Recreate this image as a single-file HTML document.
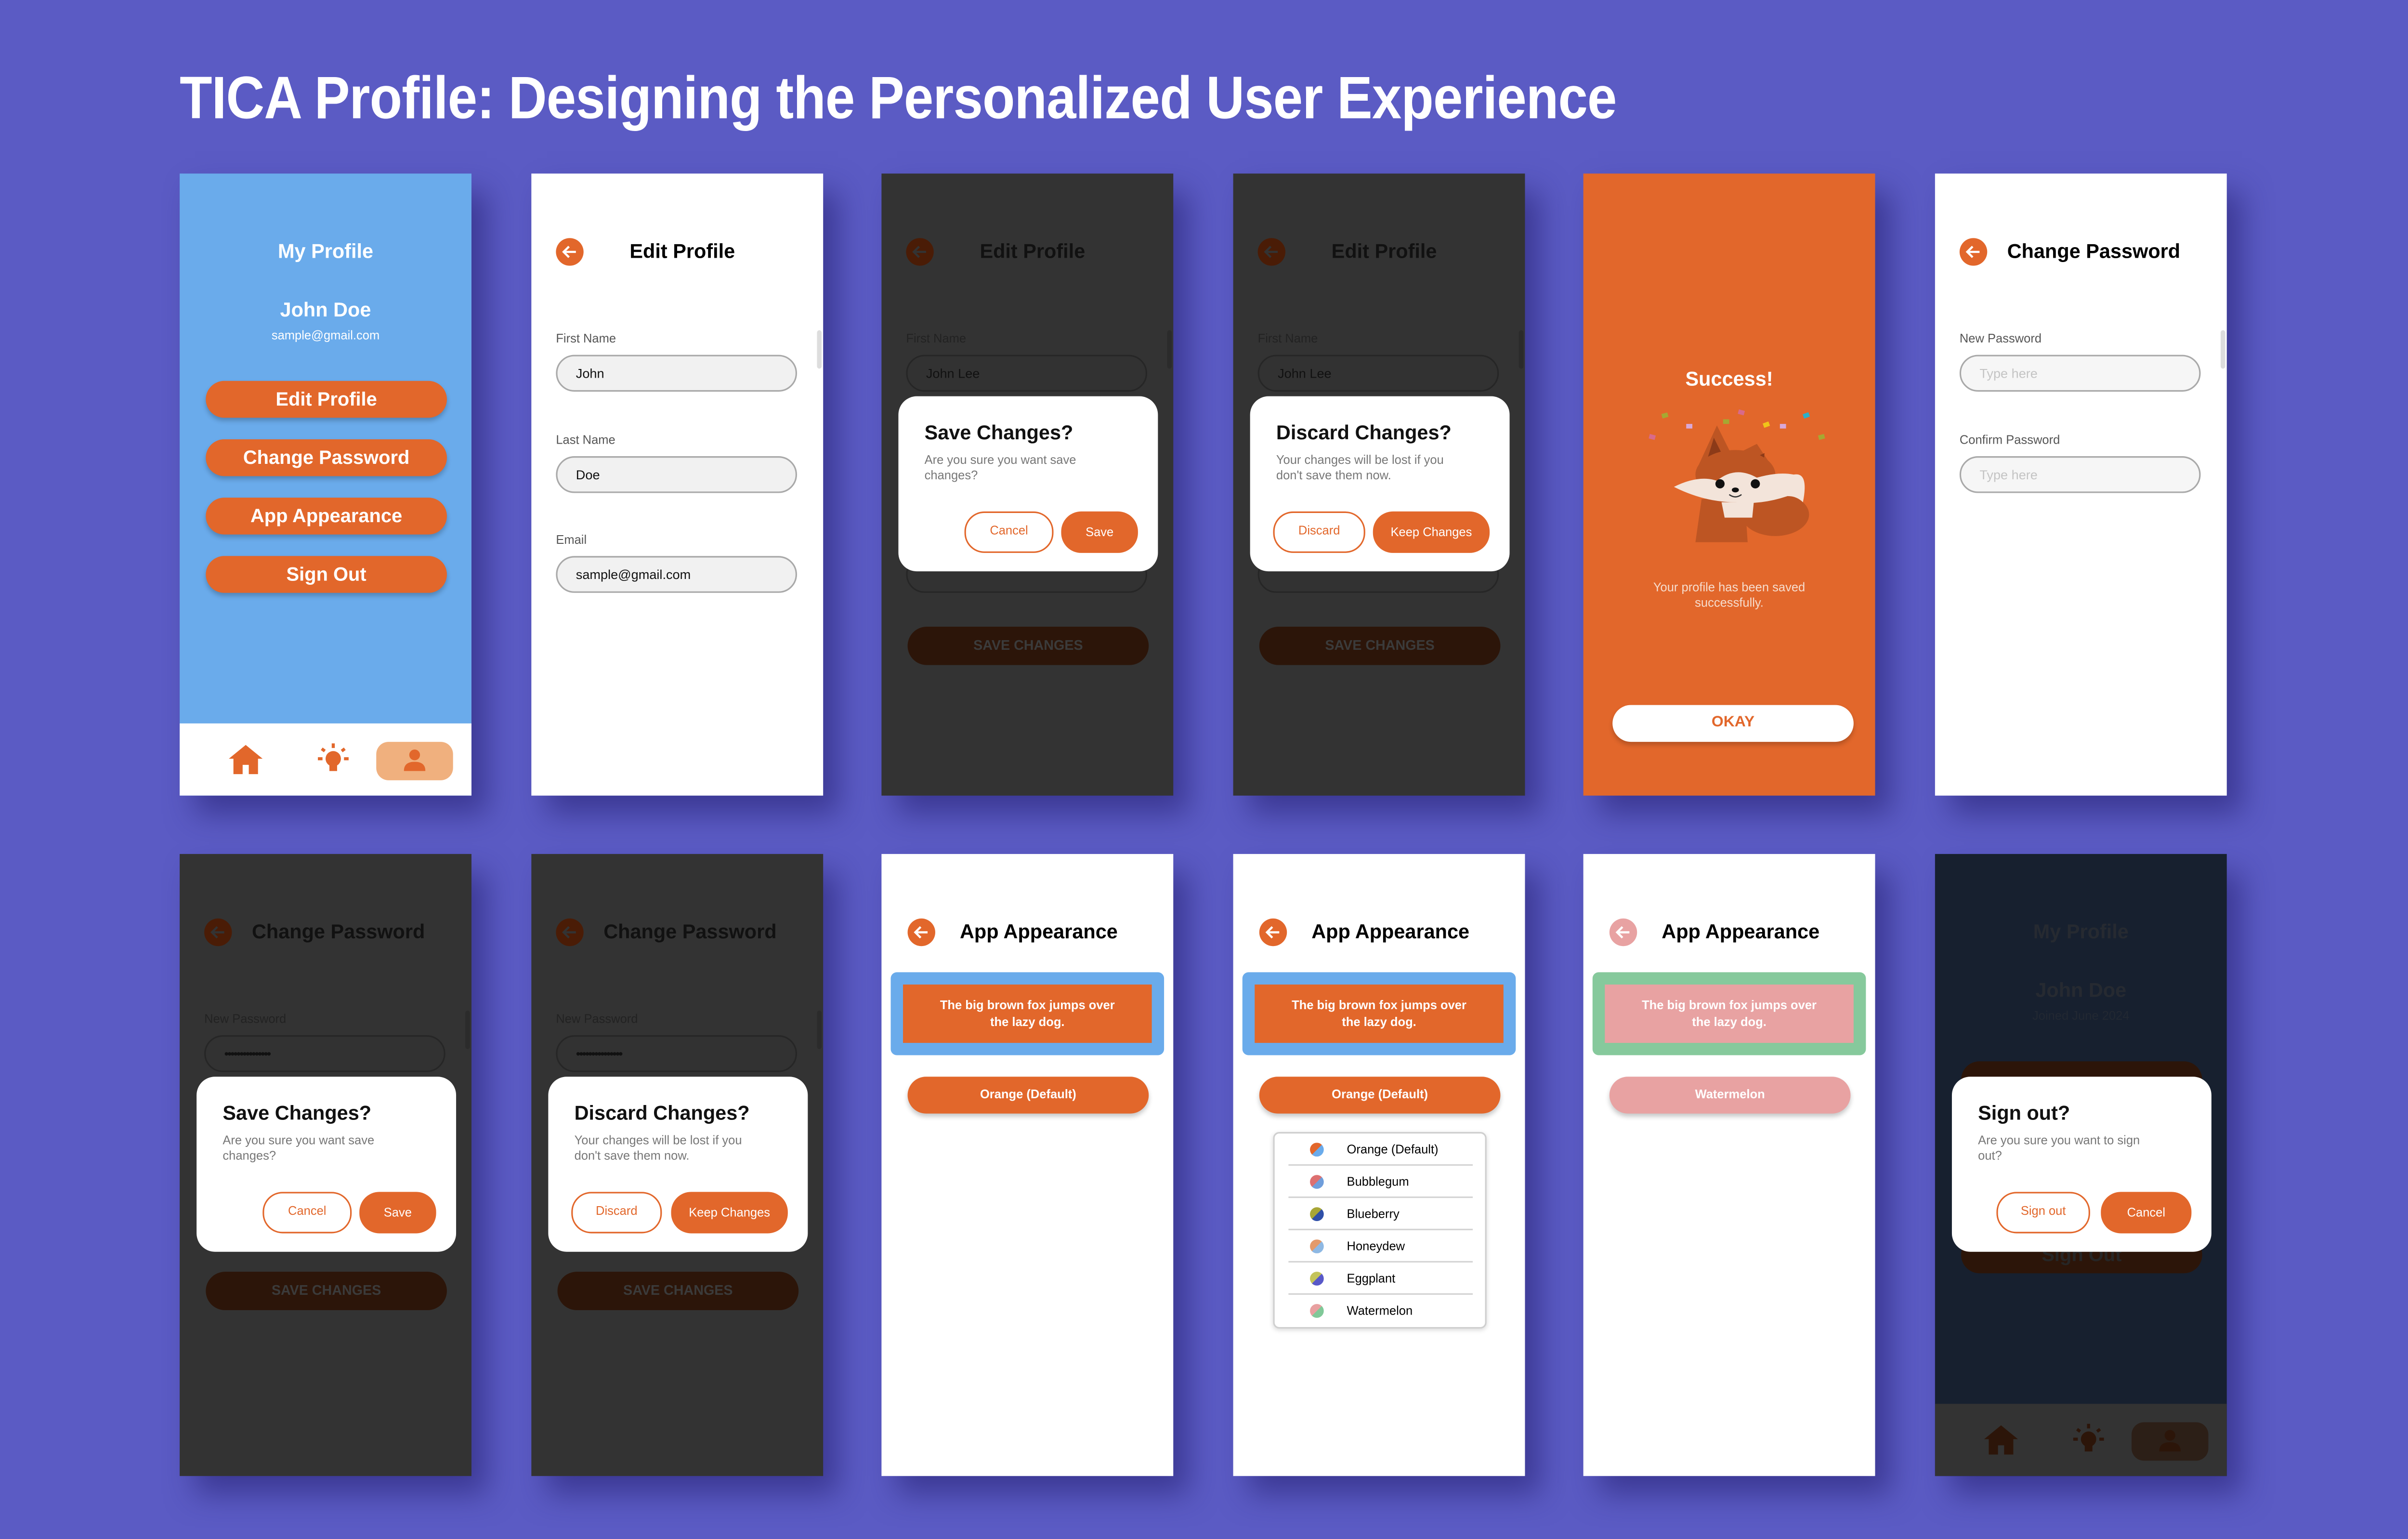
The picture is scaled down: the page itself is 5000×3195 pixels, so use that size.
<!DOCTYPE html>
<html><head><meta charset="utf-8">
<style>
html,body{margin:0;padding:0}
body{width:5000px;height:3195px;overflow:hidden;background:#5b5bc4;font-family:"Liberation Sans",sans-serif}
#w{position:absolute;left:0;top:0;width:1568px;height:1002px;transform:scale(3.18878,3.18862);transform-origin:0 0}
.s{position:absolute;width:190px;height:405px;overflow:hidden;box-shadow:10px 12px 18px rgba(35,30,110,.55)}
.a{position:absolute}
.c{text-align:center}
.t13{font-size:13px;font-weight:bold;line-height:16px}
.t8{font-size:8px;line-height:10px}
.btn{position:absolute;border-radius:13px;background:#e2672b;color:#fff;text-align:center;font-weight:bold;box-shadow:0 2px 3px rgba(0,0,0,.22)}
.inp{position:absolute;left:16px;width:155px;height:22px;border-radius:12px;border:1px solid #a9a9a9;background:#f1f1f1;font-size:8.5px;line-height:22px;text-indent:12px;color:#111}
.lab{position:absolute;left:16px;font-size:8px;color:#555;line-height:10px}
.back{position:absolute;width:18px;height:18px;border-radius:50%;background:#e2672b}
.modal{position:absolute;left:11px;top:145px;width:169px;height:114px;background:#fff;border-radius:12px}
.ob{position:absolute;border:1.5px solid #e2672b;color:#e2672b;border-radius:13px;text-align:center;font-size:8px;box-sizing:border-box;background:#fff}
.fb{position:absolute;background:#e2672b;color:#fff;border-radius:13px;text-align:center;font-size:8px}
.dk{position:absolute;left:17px;width:157px;height:25px;border-radius:13px;background:#2c1509;color:#3b3b3b;text-align:center;font-weight:bold;font-size:9px;line-height:25px;font-family:"Liberation Sans Narrow","Liberation Sans",sans-serif}
.row{position:absolute;left:0;width:137px;height:21px;font-size:8px;line-height:21px}
.row .d{position:absolute;left:23px;top:6px;width:9px;height:9px;border-radius:50%}
.row span{position:absolute;left:47px}
.row i{position:absolute;left:9px;right:8px;bottom:0;height:1px;background:#d4d4d4}
</style></head><body>
<div id="w">
<div class="a" style="left:117px;top:44.8px;white-space:nowrap;"><span id="t" style="display:inline-block;transform-origin:0 0;font-family:'Liberation Sans Narrow','Liberation Sans',sans-serif;font-weight:bold;font-size:39px;line-height:39px;color:#fff;letter-spacing:-0.3px">TICA Profile: Designing the Personalized User Experience</span></div>

<!-- Screen 1 -->
<div class="s" style="left:117px;top:113px;background:#6aabeb">
 <div class="a c t13" style="left:0;width:190px;top:43px;color:#fff">My Profile</div>
 <div class="a c t13" style="left:0;width:190px;top:81px;color:#fff">John Doe</div>
 <div class="a c t8" style="left:0;width:190px;top:101px;color:#fff">sample@gmail.com</div>
 <div class="btn" style="left:17px;top:135px;width:157px;height:24px;line-height:24px;font-size:12.5px">Edit Profile</div>
 <div class="btn" style="left:17px;top:173px;width:157px;height:24px;line-height:24px;font-size:12.5px">Change Password</div>
 <div class="btn" style="left:17px;top:211px;width:157px;height:24px;line-height:24px;font-size:12.5px">App Appearance</div>
 <div class="btn" style="left:17px;top:249px;width:157px;height:24px;line-height:24px;font-size:12.5px">Sign Out</div>
 <div class="a" style="left:0;top:358px;width:190px;height:47px;background:#fff"></div>
 <svg class="a" style="left:31px;top:371px" width="24" height="22" viewBox="0 0 24 22"><path d="M12 1 L23 10 H20 V20 H14 V14 H10 V20 H4 V10 H1 Z" fill="#e2672b"/></svg>
 <svg class="a" style="left:89px;top:370px" width="22" height="22" viewBox="0 0 22 22"><circle cx="11" cy="11" r="5" fill="#e2672b"/><rect x="8.5" y="14" width="5" height="5" fill="#e2672b"/><rect x="10" y="1" width="2" height="3" fill="#e2672b"/><rect x="1" y="10" width="3" height="2" fill="#e2672b"/><rect x="18" y="10" width="3" height="2" fill="#e2672b"/><path d="M3.5 4.5l2 1.5M18.5 4.5l-2 1.5" stroke="#e2672b" stroke-width="2"/></svg>
 <div class="a" style="left:128px;top:370px;width:50px;height:25px;border-radius:8px;background:#f0b07e"></div>
 <svg class="a" style="left:146px;top:374px" width="14" height="16" viewBox="0 0 14 16"><circle cx="7" cy="4.5" r="3.5" fill="#e2672b"/><path d="M0 15 Q0 9 7 9 Q14 9 14 15 Z" fill="#e2672b"/></svg>
</div>

<!-- Screen 2 -->
<div class="s" style="left:346px;top:113px;background:#fff">
 <div class="back" style="left:16px;top:42px"><svg width="18" height="18" viewBox="0 0 18 18"><path d="M13 9H5M8.5 5.5L5 9l3.5 3.5" stroke="#fff" stroke-width="1.4" fill="none"/></svg></div>
 <div class="a t13" style="left:64px;top:43px;color:#000">Edit Profile</div>
 <div class="lab" style="top:103px">First Name</div>
 <div class="inp" style="top:118px">John</div>
 <div class="lab" style="top:169px">Last Name</div>
 <div class="inp" style="top:184px">Doe</div>
 <div class="lab" style="top:234px">Email</div>
 <div class="inp" style="top:249px">sample@gmail.com</div>
 <div class="a" style="left:186px;top:102px;width:3px;height:25px;border-radius:2px;background:#ddd"></div>
</div>

<!-- Screen 3 -->
<div class="s" style="left:574px;top:113px;background:#333">
 <div class="back" style="left:16px;top:42px;background:#4a1c06"><svg width="18" height="18" viewBox="0 0 18 18"><path d="M13 9H5M8.5 5.5L5 9l3.5 3.5" stroke="#333" stroke-width="1.4" fill="none"/></svg></div>
 <div class="a t13" style="left:64px;top:43px;color:#111">Edit Profile</div>
 <div class="lab" style="top:103px;color:#222">First Name</div>
 <div class="inp" style="top:118px;background:#323232;border-color:#262626;color:#111">John Lee</div>
 <div class="inp" style="top:249px;background:#323232;border-color:#262626;color:#111"></div>
 <div class="a" style="left:186px;top:102px;width:3px;height:25px;border-radius:2px;background:#2b2b2b"></div>
 <div class="dk" style="top:295px">SAVE CHANGES</div>
 <div class="modal">
  <div class="a t13" style="left:17px;top:16px;color:#111">Save Changes?</div>
  <div class="a t8" style="left:17px;top:37px;color:#777">Are you sure you want save<br>changes?</div>
  <div class="ob" style="left:43px;top:75px;width:58px;height:27px;line-height:24px">Cancel</div>
  <div class="fb" style="left:106px;top:75px;width:50px;height:27px;line-height:27px">Save</div>
 </div>
</div>

<!-- Screen 4 -->
<div class="s" style="left:803px;top:113px;background:#333">
 <div class="back" style="left:16px;top:42px;background:#4a1c06"><svg width="18" height="18" viewBox="0 0 18 18"><path d="M13 9H5M8.5 5.5L5 9l3.5 3.5" stroke="#333" stroke-width="1.4" fill="none"/></svg></div>
 <div class="a t13" style="left:64px;top:43px;color:#111">Edit Profile</div>
 <div class="lab" style="top:103px;color:#222">First Name</div>
 <div class="inp" style="top:118px;background:#323232;border-color:#262626;color:#111">John Lee</div>
 <div class="inp" style="top:249px;background:#323232;border-color:#262626;color:#111"></div>
 <div class="a" style="left:186px;top:102px;width:3px;height:25px;border-radius:2px;background:#2b2b2b"></div>
 <div class="dk" style="top:295px">SAVE CHANGES</div>
 <div class="modal">
  <div class="a t13" style="left:17px;top:16px;color:#111">Discard Changes?</div>
  <div class="a t8" style="left:17px;top:37px;color:#777">Your changes will be lost if you<br>don't save them now.</div>
  <div class="ob" style="left:15px;top:75px;width:60px;height:27px;line-height:24px">Discard</div>
  <div class="fb" style="left:80px;top:75px;width:76px;height:27px;line-height:27px">Keep Changes</div>
 </div>
</div>

<!-- Screen 5 -->
<div class="s" style="left:1031px;top:113px;background:#e2672b">
 <div class="a c t13" style="left:0;width:190px;top:126px;color:#fff">Success!</div>
 <svg class="a" style="left:35px;top:150px" width="125" height="95" viewBox="0 0 125 95">
  <rect x="16" y="6" width="4" height="3" fill="#a6a832" transform="rotate(-15 18 7)"/>
  <rect x="8" y="20" width="4" height="3" fill="#d86a8a" transform="rotate(15 10 21)"/>
  <rect x="32" y="13" width="4" height="3" fill="#d8a8d8"/>
  <rect x="56" y="10" width="4" height="3" fill="#a6a832"/>
  <rect x="66" y="4" width="4" height="3" fill="#d86a8a" transform="rotate(15 68 5)"/>
  <rect x="82" y="12" width="4" height="3" fill="#f0c419" transform="rotate(-20 84 13)"/>
  <rect x="93" y="13" width="4" height="3" fill="#d8a8d8"/>
  <rect x="108" y="6" width="4" height="3" fill="#2bb0c8" transform="rotate(-20 110 7)"/>
  <rect x="118" y="20" width="4" height="3" fill="#a6a832" transform="rotate(-15 120 21)"/>
  <ellipse cx="90" cy="72" rx="22" ry="14" fill="#bd5523"/>
  <path d="M42 62 L38 90 H72 L70 60 Z" fill="#bd5523"/>
  <path d="M40 40 L52 14 L62 34 L78 26 L90 44 Z" fill="#bd5523"/>
  <path d="M50 22 L55 32 L46 35 Z M83 32 L82 42 L74 36 Z" fill="#8c3a18"/>
  <ellipse cx="64" cy="46" rx="26" ry="16" fill="#bd5523"/>
  <path d="M24 54 Q40 46 52 50 Q64 40 78 48 Q92 44 102 46 Q112 44 108 64 Q104 60 98 60 Q80 66 64 64 Q44 64 24 54 Z" fill="#f3e4da"/>
  <path d="M55 64 H76 L75 74 H57 Z" fill="#f3e4da"/>
  <circle cx="54" cy="52" r="3" fill="#111"/><circle cx="77" cy="52" r="3" fill="#111"/>
  <ellipse cx="64" cy="56" rx="2.3" ry="1.6" fill="#111"/>
  <path d="M60 59 Q64 62 68 59" stroke="#333" stroke-width="0.8" fill="none"/>
 </svg>
 <div class="a c t8" style="left:0;width:190px;top:265px;color:#f6dccd">Your profile has been saved<br>successfully.</div>
 <div class="a c" style="left:19px;top:346px;width:157px;height:24px;border-radius:12px;background:#fff;color:#e2672b;font-weight:bold;font-size:10px;line-height:24px;box-shadow:0 2px 3px rgba(0,0,0,.2);font-family:'Liberation Sans Narrow','Liberation Sans',sans-serif">OKAY</div>
</div>

<!-- Screen 6 -->
<div class="s" style="left:1260px;top:113px;background:#fff">
 <div class="back" style="left:16px;top:42px"><svg width="18" height="18" viewBox="0 0 18 18"><path d="M13 9H5M8.5 5.5L5 9l3.5 3.5" stroke="#fff" stroke-width="1.4" fill="none"/></svg></div>
 <div class="a t13" style="left:47px;top:43px;color:#000">Change Password</div>
 <div class="lab" style="top:103px">New Password</div>
 <div class="inp" style="top:118px;background:#f6f6f6;color:#c4c4c4">Type here</div>
 <div class="lab" style="top:169px">Confirm Password</div>
 <div class="inp" style="top:184px;background:#f6f6f6;color:#c4c4c4">Type here</div>
 <div class="a" style="left:186px;top:102px;width:3px;height:25px;border-radius:2px;background:#ddd"></div>
</div>

<!-- Screen 7 -->
<div class="s" style="left:117px;top:556px;background:#333">
 <div class="back" style="left:16px;top:42px;background:#4a1c06"><svg width="18" height="18" viewBox="0 0 18 18"><path d="M13 9H5M8.5 5.5L5 9l3.5 3.5" stroke="#333" stroke-width="1.4" fill="none"/></svg></div>
 <div class="a t13" style="left:47px;top:43px;color:#111">Change Password</div>
 <div class="lab" style="top:103px;color:#222">New Password</div>
 <div class="inp" style="top:118px;background:#323232;border-color:#262626;color:#111;letter-spacing:-1px">•••••••••••••••</div>
 <div class="a" style="left:186px;top:102px;width:3px;height:25px;border-radius:2px;background:#2b2b2b"></div>
 <div class="dk" style="top:272px">SAVE CHANGES</div>
 <div class="modal">
  <div class="a t13" style="left:17px;top:16px;color:#111">Save Changes?</div>
  <div class="a t8" style="left:17px;top:37px;color:#777">Are you sure you want save<br>changes?</div>
  <div class="ob" style="left:43px;top:75px;width:58px;height:27px;line-height:24px">Cancel</div>
  <div class="fb" style="left:106px;top:75px;width:50px;height:27px;line-height:27px">Save</div>
 </div>
</div>

<!-- Screen 8 -->
<div class="s" style="left:346px;top:556px;background:#333">
 <div class="back" style="left:16px;top:42px;background:#4a1c06"><svg width="18" height="18" viewBox="0 0 18 18"><path d="M13 9H5M8.5 5.5L5 9l3.5 3.5" stroke="#333" stroke-width="1.4" fill="none"/></svg></div>
 <div class="a t13" style="left:47px;top:43px;color:#111">Change Password</div>
 <div class="lab" style="top:103px;color:#222">New Password</div>
 <div class="inp" style="top:118px;background:#323232;border-color:#262626;color:#111;letter-spacing:-1px">•••••••••••••••</div>
 <div class="a" style="left:186px;top:102px;width:3px;height:25px;border-radius:2px;background:#2b2b2b"></div>
 <div class="dk" style="top:272px">SAVE CHANGES</div>
 <div class="modal">
  <div class="a t13" style="left:17px;top:16px;color:#111">Discard Changes?</div>
  <div class="a t8" style="left:17px;top:37px;color:#777">Your changes will be lost if you<br>don't save them now.</div>
  <div class="ob" style="left:15px;top:75px;width:59px;height:27px;line-height:24px">Discard</div>
  <div class="fb" style="left:80px;top:75px;width:76px;height:27px;line-height:27px">Keep Changes</div>
 </div>
</div>

<!-- Screen 9 -->
<div class="s" style="left:574px;top:556px;background:#fff">
 <div class="back" style="left:17px;top:42px"><svg width="18" height="18" viewBox="0 0 18 18"><path d="M13 9H5M8.5 5.5L5 9l3.5 3.5" stroke="#fff" stroke-width="1.4" fill="none"/></svg></div>
 <div class="a t13" style="left:51px;top:43px;color:#000">App Appearance</div>
 <div class="a" style="left:6px;top:77px;width:178px;height:54px;border-radius:4px;background:#6aabeb"></div>
 <div class="a c" style="left:14px;top:85px;width:162px;height:38px;background:#e2672b;color:#fff;font-weight:bold;font-size:8px;line-height:10.5px;padding-top:9px;box-sizing:border-box">The big brown fox jumps over<br>the lazy dog.</div>
 <div class="btn" style="left:17px;top:145px;width:157px;height:24px;line-height:24px;font-size:8px">Orange (Default)</div>
</div>

<!-- Screen 10 -->
<div class="s" style="left:803px;top:556px;background:#fff">
 <div class="back" style="left:17px;top:42px"><svg width="18" height="18" viewBox="0 0 18 18"><path d="M13 9H5M8.5 5.5L5 9l3.5 3.5" stroke="#fff" stroke-width="1.4" fill="none"/></svg></div>
 <div class="a t13" style="left:51px;top:43px;color:#000">App Appearance</div>
 <div class="a" style="left:6px;top:77px;width:178px;height:54px;border-radius:4px;background:#6aabeb"></div>
 <div class="a c" style="left:14px;top:85px;width:162px;height:38px;background:#e2672b;color:#fff;font-weight:bold;font-size:8px;line-height:10.5px;padding-top:9px;box-sizing:border-box">The big brown fox jumps over<br>the lazy dog.</div>
 <div class="btn" style="left:17px;top:145px;width:157px;height:24px;line-height:24px;font-size:8px">Orange (Default)</div>
 <div class="a" style="left:26px;top:181px;width:137px;height:126px;border:1px solid #cfcfcf;border-radius:4px;background:#fff;box-shadow:0 1px 3px rgba(0,0,0,.15)">
  <div class="row" style="top:0"><b class="d" style="background:linear-gradient(135deg,#e2672b 50%,#6aabeb 50%)"></b><span>Orange (Default)</span><i></i></div>
  <div class="row" style="top:21px"><b class="d" style="background:linear-gradient(135deg,#dd7070 50%,#6f9edb 50%)"></b><span>Bubblegum</span><i></i></div>
  <div class="row" style="top:42px"><b class="d" style="background:linear-gradient(135deg,#a8a636 50%,#2f4fa8 50%)"></b><span>Blueberry</span><i></i></div>
  <div class="row" style="top:63px"><b class="d" style="background:linear-gradient(135deg,#e39a6a 50%,#8eb8e3 50%)"></b><span>Honeydew</span><i></i></div>
  <div class="row" style="top:84px"><b class="d" style="background:linear-gradient(135deg,#c4c45a 50%,#5858c8 50%)"></b><span>Eggplant</span><i></i></div>
  <div class="row" style="top:105px"><b class="d" style="background:linear-gradient(135deg,#e8a0a0 50%,#80c898 50%)"></b><span>Watermelon</span></div>
 </div>
</div>

<!-- Screen 11 -->
<div class="s" style="left:1031px;top:556px;background:#fff">
 <div class="back" style="left:17px;top:42px;background:#e8a2a2"><svg width="18" height="18" viewBox="0 0 18 18"><path d="M13 9H5M8.5 5.5L5 9l3.5 3.5" stroke="#fff" stroke-width="1.4" fill="none"/></svg></div>
 <div class="a t13" style="left:51px;top:43px;color:#000">App Appearance</div>
 <div class="a" style="left:6px;top:77px;width:178px;height:54px;border-radius:4px;background:#86c99c"></div>
 <div class="a c" style="left:14px;top:85px;width:162px;height:38px;background:#e8a2a2;color:#fff;font-weight:bold;font-size:8px;line-height:10.5px;padding-top:9px;box-sizing:border-box">The big brown fox jumps over<br>the lazy dog.</div>
 <div class="btn" style="left:17px;top:145px;width:157px;height:24px;line-height:24px;font-size:8px;background:#e8a2a2">Watermelon</div>
</div>

<!-- Screen 12 -->
<div class="s" style="left:1260px;top:556px;background:#17202f">
 <div class="a c t13" style="left:0;width:190px;top:43px;color:#262a31">My Profile</div>
 <div class="a c t13" style="left:0;width:190px;top:81px;color:#262a31">John Doe</div>
 <div class="a c t8" style="left:0;width:190px;top:101px;color:#222832">Joined June 2024</div>
 <div class="a" style="left:17px;top:135px;width:157px;height:24px;border-radius:12px;background:#2c1509"></div>
 <div class="a c" style="left:17px;top:249px;width:157px;height:24px;border-radius:12px;background:#2c1509;color:#262626;font-weight:bold;font-size:12.5px;line-height:24px">Sign Out</div>
 <div class="modal">
  <div class="a t13" style="left:17px;top:16px;color:#111">Sign out?</div>
  <div class="a t8" style="left:17px;top:37px;color:#777">Are you sure you want to sign<br>out?</div>
  <div class="ob" style="left:29px;top:75px;width:61px;height:27px;line-height:24px">Sign out</div>
  <div class="fb" style="left:97px;top:75px;width:59px;height:27px;line-height:27px">Cancel</div>
 </div>
 <div class="a" style="left:0;top:358px;width:190px;height:47px;background:#333"></div>
 <svg class="a" style="left:31px;top:371px" width="24" height="22" viewBox="0 0 24 22"><path d="M12 1 L23 10 H20 V20 H14 V14 H10 V20 H4 V10 H1 Z" fill="#2c1509"/></svg>
 <svg class="a" style="left:89px;top:370px" width="22" height="22" viewBox="0 0 22 22"><circle cx="11" cy="11" r="5" fill="#2c1509"/><rect x="8.5" y="14" width="5" height="5" fill="#2c1509"/><rect x="10" y="1" width="2" height="3" fill="#2c1509"/><rect x="1" y="10" width="3" height="2" fill="#2c1509"/><rect x="18" y="10" width="3" height="2" fill="#2c1509"/><path d="M3.5 4.5l2 1.5M18.5 4.5l-2 1.5" stroke="#2c1509" stroke-width="2"/></svg>
 <div class="a" style="left:128px;top:370px;width:50px;height:25px;border-radius:8px;background:#2c1f17"></div>
 <svg class="a" style="left:146px;top:374px" width="14" height="16" viewBox="0 0 14 16"><circle cx="7" cy="4.5" r="3.5" fill="#2c1509"/><path d="M0 15 Q0 9 7 9 Q14 9 14 15 Z" fill="#2c1509"/></svg>
</div>
</div>
<script>
var t=document.getElementById('t');var r=936/t.offsetWidth;t.style.transform='scaleX('+r+')';
</script>
</body></html>
